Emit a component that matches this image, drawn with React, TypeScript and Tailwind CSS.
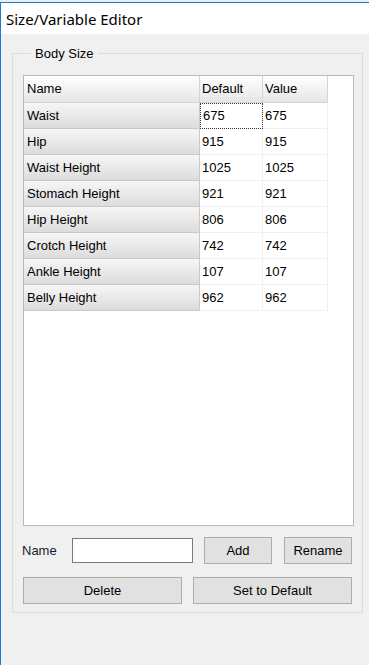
import React from 'react'

const rows = [
  { name: 'Waist', def: '675', value: '675' },
  { name: 'Hip', def: '915', value: '915' },
  { name: 'Waist Height', def: '1025', value: '1025' },
  { name: 'Stomach Height', def: '921', value: '921' },
  { name: 'Hip Height', def: '806', value: '806' },
  { name: 'Crotch Height', def: '742', value: '742' },
  { name: 'Ankle Height', def: '107', value: '107' },
  { name: 'Belly Height', def: '962', value: '962' },
]

function Button({ label, className }: { label: string; className: string }) {
  return (
    <button
      className={`flex items-center justify-center bg-[#e1e1e1] border border-[#adadad] text-[13px] text-black ${className}`}
    >
      {label}
    </button>
  )
}

export default function App() {
  return (
    <div
      className="w-[369px] h-[665px] bg-[#f0f0f0] flex flex-col overflow-hidden"
      style={{ fontFamily: '"Liberation Sans", Arial, sans-serif' }}
    >
      <div className="h-[2px] bg-[#ececec]" />
      <div className="flex-1 flex flex-col border-l border-t border-[#1b7bd6]">
        {/* title bar */}
        <div className="h-[31px] bg-white flex items-center pl-[5px]">
          <span
            className="text-[15px] text-black leading-none pt-[1px]"
            style={{ fontFamily: '"Noto Sans", "Open Sans", sans-serif' }}
          >
            Size/Variable Editor
          </span>
        </div>

        {/* group box */}
        <fieldset className="ml-[11px] mt-[12px] w-[351px] border border-[#dcdcdc] pl-[10px] pr-[8px] pb-[8px]">
          <legend className="ml-[8px] px-[4px] text-[13px] leading-[15px] text-black">Body Size</legend>

          {/* table */}
          <div className="mt-[14px] w-[331px] h-[451px] bg-white border border-[#b9b9b9] flex flex-col">
            <div className="flex h-[27px]">
              <div className="w-[176px] flex items-center pl-[3px] text-[13px] bg-gradient-to-b from-[#ffffff] to-[#e6e6e6] border-r border-b border-[#d5d5d5]">
                Name
              </div>
              <div className="w-[63px] flex items-center pl-[2px] text-[13px] bg-gradient-to-b from-[#ffffff] to-[#e6e6e6] border-r border-b border-[#d5d5d5]">
                Default
              </div>
              <div className="w-[65px] flex items-center pl-[2px] text-[13px] bg-gradient-to-b from-[#ffffff] to-[#e6e6e6] border-r border-b border-[#d5d5d5]">
                Value
              </div>
            </div>
            {rows.map((r, i) => (
              <div key={r.name} className="flex h-[26px]">
                <div className="w-[176px] flex items-center pl-[3px] text-[13px] bg-gradient-to-b from-[#f6f6f6] to-[#dcdcdc] border-r border-b border-[#c9c9c9]">
                  {r.name}
                </div>
                <div
                  className={`w-[63px] flex items-center pl-[2px] text-[13px] border-r border-b ${
                    i === 0 ? 'border border-dotted border-[#333]' : 'border-[#f0f0f0]'
                  }`}
                >
                  {r.def}
                </div>
                <div className="w-[65px] flex items-center pl-[2px] text-[13px] border-r border-b border-[#f0f0f0]">
                  {r.value}
                </div>
              </div>
            ))}
          </div>

          {/* name row */}
          <div className="mt-[11px] flex items-center h-[27px]">
            <span className="w-[50px] -ml-[1px] text-[13px] text-[#1a1a2e]">Name</span>
            <input className="w-[121px] h-[25px] bg-white border border-[#7a7a7a] outline-none" />
            <Button label="Add" className="ml-[11px] w-[68px] h-[27px]" />
            <Button label="Rename" className="ml-[12px] w-[68px] h-[27px]" />
          </div>

          {/* bottom buttons */}
          <div className="mt-[13px] w-[329px] flex justify-between">
            <Button label="Delete" className="w-[159px] h-[27px]" />
            <Button label="Set to Default" className="w-[159px] h-[27px]" />
          </div>
        </fieldset>
      </div>
    </div>
  )
}
